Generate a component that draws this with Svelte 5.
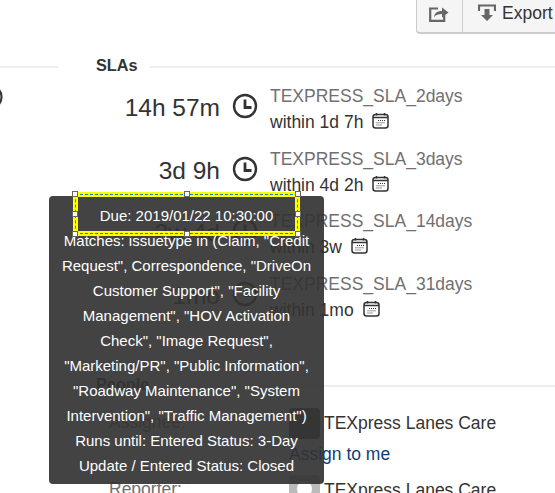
<script lang="ts">
	type Sla = { remaining: string; name: string; within: string };

	const slas: Sla[] = [
		{ remaining: '14h 57m', name: 'TEXPRESS_SLA_2days', within: 'within 1d 7h' },
		{ remaining: '3d 9h', name: 'TEXPRESS_SLA_3days', within: 'within 4d 2h' },
		{ remaining: '2w 4d', name: 'TEXPRESS_SLA_14days', within: 'within 3w' },
		{ remaining: '1mo', name: 'TEXPRESS_SLA_31days', within: 'within 1mo' }
	];

	const handles = ['tl', 'tc', 'tr', 'ml', 'mr', 'bl', 'bc', 'br'];

	const tooltipLines = [
		'Matches: issuetype in (Claim, "Credit',
		'Request", Correspondence, "DriveOn',
		'Customer Support", "Facility',
		'Management", "HOV Activation',
		'Check", "Image Request",',
		'"Marketing/PR", "Public Information",',
		'"Roadway Maintenance", "System',
		'Intervention", "Traffic Management")',
		'Runs until: Entered Status: 3-Day',
		'Update / Entered Status: Closed'
	];
</script>

<div class="page">
	<div class="toolbar">
		<div class="btn-group">
			<button class="btn share" aria-label="Share">
				<svg width="20" height="17" viewBox="0 0 20 17">
					<path d="M9 3.500H1.200v12.300h14V10" fill="none" stroke="#666" stroke-width="2.200" />
					<path d="M5 12c.6-4 3.400-6 8-6V2.500l6.500 5-6.500 5V9c-3.500 0-6 .8-8 3z" fill="#666" />
				</svg>
			</button>
			<button class="btn export">
				<svg width="18" height="18" viewBox="0 0 18 18">
					<path d="M1 7V1.500h16V7" fill="none" stroke="#666" stroke-width="2.200" />
					<path d="M6.500 5h5v6H15l-6 6-6-6h3.500z" fill="#666" />
				</svg>
				<span>Export</span>
			</button>
		</div>
	</div>

	<div class="heading">
		<span class="rule left"></span>
		<h2>SLAs</h2>
		<span class="rule"></span>
	</div>

	<div class="slas">
		<svg class="cut-icon" width="26" height="26" viewBox="0 0 26 26">
			<circle cx="13" cy="13" r="11.500" fill="none" stroke="#333" stroke-width="2.200" />
		</svg>
		{#each slas as sla}
			<div class="sla">
				<div class="remaining">{sla.remaining}</div>
				<svg class="clock" width="26" height="26" viewBox="0 0 26 26">
					<circle cx="13" cy="13" r="11" fill="none" stroke="#333" stroke-width="2.400" />
					<path d="M13 6.500V14.500H19.500" fill="none" stroke="#333" stroke-width="2.800" />
				</svg>
				<div class="info">
					<div class="name">{sla.name}</div>
					<div class="within">
						{sla.within}
						<svg class="cal" width="17" height="17" viewBox="0 0 17 17">
							<rect x="1" y="2.500" width="15" height="13.500" rx="2.500" fill="#fff" stroke="#333" stroke-width="1.500" />
							<path d="M1 5.500H16" stroke="#333" stroke-width="1.500" />
							<path d="M4.500 1v2.500M12.500 1v2.500" stroke="#333" stroke-width="1.500" />
							<path d="M6 8.500h7M4.500 10.800h8.500M4.500 13h6" stroke="#333" stroke-dasharray="1 1" />
						</svg>
					</div>
				</div>
			</div>
		{/each}
	</div>

	<div class="heading people">
		<h2>People</h2>
		<span class="rule"></span>
	</div>

	<dl class="people-list">
		<dt>Assignee:</dt>
		<dd>
			<div class="person"><span class="avatar dark"></span>TEXpress Lanes Care</div>
			<a class="assign" href="#assign">Assign to me</a>
		</dd>
		<dt class="reporter">Reporter:</dt>
		<dd class="reporter">
			<div class="person"><span class="avatar"><i></i></span>TEXpress Lanes Care</div>
		</dd>
	</dl>

	<div class="tooltip">
		<div class="selected">
			Due: 2019/01/22 10:30:00
			{#each handles as h}
				<span class="handle {h}"></span>
			{/each}
		</div>
		{#each tooltipLines as line}
			<div class="line">{line}</div>
		{/each}
	</div>
</div>

<style>
	:global(body) {
		margin: 0;
		background: #fff;
	}

	.page {
		position: relative;
		width: 555px;
		height: 493px;
		overflow: hidden;
		font-family: 'Liberation Sans', Arial, sans-serif;
		color: #333;
	}

	.toolbar {
		display: flex;
		justify-content: flex-end;
		height: 34px;
	}

	.btn-group {
		display: flex;
		margin-right: -20px;
		width: 159px;
		height: 34px;
		box-sizing: border-box;
		background: #f5f5f5;
		border: 1px solid #ccc;
		border-top: 0;
		border-bottom-width: 2px;
		border-radius: 0 0 0 4px;
	}

	.btn {
		display: flex;
		align-items: center;
		padding: 0;
		border: 0;
		background: none;
		font: inherit;
		color: #333;
	}

	.share {
		width: 46px;
		padding-left: 12px;
		padding-bottom: 6px;
		box-sizing: border-box;
		border-right: 1px solid #ccc;
	}

	.export {
		padding-left: 15px;
		padding-bottom: 6px;
		gap: 6px;
		font-size: 17.500px;
	}

	.heading {
		display: flex;
		align-items: center;
		height: 20px;
		margin-top: 21px;
	}

	.heading h2 {
		margin: 0 0 0 38px;
		font-size: 16.250px;
		font-weight: 700;
		color: #333;
	}

	.rule {
		flex: 1;
		height: 2px;
		margin-top: 4px;
		margin-left: 12px;
		background: #eee;
	}

	.rule.left {
		flex: none;
		width: 58px;
		margin-left: 0;
	}

	.slas {
		position: relative;
		margin-top: 8px;
		height: 290px;
	}

	.cut-icon {
		position: absolute;
		left: -23px;
		top: 1px;
	}

	.sla {
		display: grid;
		grid-template-columns: 220px 26px 1fr;
		column-gap: 12px;
		height: 62.500px;
	}

	.remaining {
		margin-top: 11px;
		font-size: 24.500px;
		line-height: 28px;
		text-align: right;
	}

	.clock {
		margin-top: 10px;
	}

	.name {
		margin-top: 1px;
		font-size: 17.500px;
		line-height: 25px;
		color: #707070;
	}

	.within {
		display: flex;
		align-items: center;
		gap: 9px;
		margin-top: 1px;
		font-size: 17.500px;
		line-height: 25px;
	}

	.cal {
		margin-top: -4px;
	}

	.heading.people {
		position: absolute;
		left: 0;
		right: 0;
		top: 374px;
		margin: 0;
	}

	.heading.people h2 {
		margin-left: 96px;
	}

	.people-list {
		position: absolute;
		left: 109px;
		right: 0;
		top: 408px;
		margin: 0;
		display: grid;
		grid-template-columns: 180px 1fr;
		font-size: 17.500px;
	}

	dt {
		color: #707070;
		line-height: 28px;
	}

	dd {
		margin: 0;
	}

	dt.reporter,
	dd.reporter {
		margin-top: 6px;
		white-space: nowrap;
	}

	.person {
		display: flex;
		align-items: flex-start;
		gap: 4px;
		line-height: 30px;
		white-space: nowrap;
	}

	.avatar {
		flex: none;
		position: relative;
		width: 31px;
		height: 31px;
		overflow: hidden;
		border-radius: 4px;
		background: #bbb;
	}

	.avatar.dark {
		background: #555;
	}

	.avatar i {
		position: absolute;
		left: 8px;
		top: 6px;
		width: 15px;
		height: 16px;
		border-radius: 50%;
		background: #fff;
	}

	.assign {
		display: block;
		line-height: 30px;
		color: #0f3d7a;
		text-decoration: none;
		white-space: nowrap;
	}

	.tooltip {
		position: absolute;
		left: 49px;
		top: 196px;
		width: 275px;
		height: 288px;
		box-sizing: border-box;
		background: rgba(51, 51, 51, 0.92);
		border-radius: 4px;
		color: #fff;
		font-size: 15px;
		line-height: 25px;
		text-align: center;
	}

	.line {
		white-space: nowrap;
		margin-left: -5px;
		margin-right: -5px;
	}

	.selected {
		position: relative;
		z-index: 1;
		margin: -4px 24px -8px;
		height: 44px;
		box-sizing: border-box;
		padding-top: 1px;
		line-height: 36px;
		border: 5px solid #ffff00;
		white-space: nowrap;
	}

	.selected::after {
		content: '';
		position: absolute;
		inset: -3px;
		border: 1px dashed #0a84c8;
		pointer-events: none;
	}

	.handle {
		position: absolute;
		z-index: 1;
		width: 4px;
		height: 4px;
		background: #fff;
		border: 1px solid #666;
	}

	.tl, .tc, .tr { top: -6px; }
	.bl, .bc, .br { bottom: -6px; }
	.ml, .mr { top: 14px; }
	.tl, .ml, .bl { left: -6px; }
	.tr, .mr, .br { right: -6px; }
	.tc, .bc { left: 106px; }
</style>
